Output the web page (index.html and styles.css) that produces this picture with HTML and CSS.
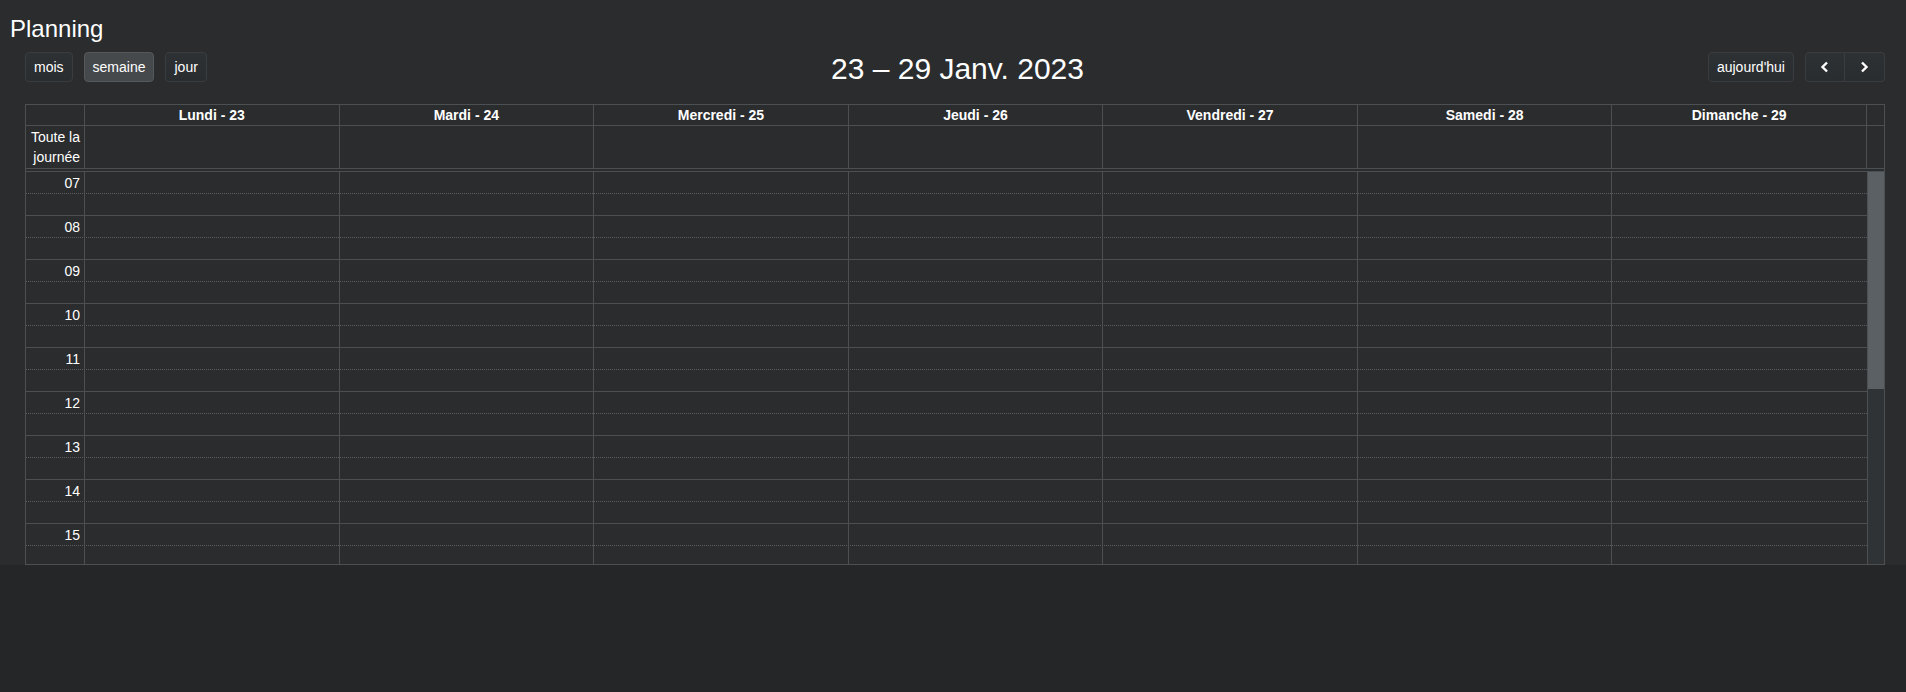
FILE: index.html
```html
<!DOCTYPE html>
<html lang="fr">
<head>
<meta charset="utf-8">
<title>Planning</title>
<link rel="stylesheet" href="styles.css">
</head>
<body>
<div class="page">
  <h1 class="page-title">Planning</h1>
  <div class="calendar">
    <div class="toolbar">
      <div class="tb-left">
        <button class="btn">mois</button>
        <button class="btn active">semaine</button>
        <button class="btn">jour</button>
      </div>
      <h2 class="tb-title">23 – 29 Janv. 2023</h2>
      <div class="tb-right">
        <button class="btn">aujourd'hui</button>
        <div class="btn-group">
          <button class="btn icon-btn" aria-label="précédent"><svg width="10" height="12" viewBox="0 0 10 12"><polyline points="7,1.5 2.5,6 7,10.5" fill="none" stroke="#fff" stroke-width="2.4" stroke-linejoin="miter"/></svg></button>
          <button class="btn icon-btn" aria-label="suivant"><svg width="10" height="12" viewBox="0 0 10 12"><polyline points="3,1.5 7.5,6 3,10.5" fill="none" stroke="#fff" stroke-width="2.4" stroke-linejoin="miter"/></svg></button>
        </div>
      </div>
    </div>

    <div class="grid">
      <div class="row head-row">
        <div class="cell axis"></div>
        <div class="cell day-head">Lundi - 23</div>
        <div class="cell day-head">Mardi - 24</div>
        <div class="cell day-head">Mercredi - 25</div>
        <div class="cell day-head">Jeudi - 26</div>
        <div class="cell day-head">Vendredi - 27</div>
        <div class="cell day-head">Samedi - 28</div>
        <div class="cell day-head">Dimanche - 29</div>
        <div class="cell gutter"></div>
      </div>
      <div class="row allday-row">
        <div class="cell axis allday-label">Toute la<br>journée</div>
        <div class="cell"></div><div class="cell"></div><div class="cell"></div><div class="cell"></div>
        <div class="cell"></div><div class="cell"></div><div class="cell"></div>
        <div class="cell gutter"></div>
      </div>
      <div class="divider"></div>
      <div class="body">
        <div class="slots" id="slots"></div>
        <div class="scrollbar"><div class="thumb"></div></div>
      </div>
    </div>
  </div>
</div>
<script src="app.js"></script>
</body>
</html>
```

FILE: app.js
```js
(function () {
  var slots = document.getElementById('slots');
  var html = '';
  for (var h = 7; h <= 15; h++) {
    var label = (h < 10 ? '0' : '') + h;
    for (var half = 0; half < 2; half++) {
      html += '<div class="row slot ' + (half === 0 ? 'minor' : 'major') + '">';
      html += '<div class="cell axis time">' + (half === 0 ? label : '') + '</div>';
      for (var d = 0; d < 7; d++) {
        html += '<div class="cell' + (d === 6 ? ' last' : '') + '"></div>';
      }
      html += '</div>';
    }
  }
  slots.innerHTML = html;
})();
```

FILE: styles.css
```css
* { box-sizing: border-box; }

html, body {
  margin: 0;
  padding: 0;
  background: #252628;
  color: #fff;
  font-family: "Liberation Sans", Arial, sans-serif;
  font-size: 14px;
}

.page {
  height: 565px;
  background: #2a2c2e;
  padding: 15px 21px 0 10px;
}

.page-title {
  margin: 0;
  font-size: 24px;
  font-weight: normal;
  line-height: 28px;
  color: #fff;
}

.calendar {
  margin: 9px 0 0 15px;
}

.toolbar {
  display: flex;
  justify-content: space-between;
  align-items: flex-start;
  height: 34px;
  margin-bottom: 18px;
}

.tb-left, .tb-right {
  display: flex;
  gap: 11px;
  width: 300px;
}

.tb-right { justify-content: flex-end; }

.tb-title {
  margin: 0;
  padding-left: 5px;
  font-size: 30px;
  font-weight: normal;
  line-height: 34px;
  color: #fff;
}

.btn {
  height: 30px;
  padding: 0 8px;
  font-family: "Liberation Sans", Arial, sans-serif;
  font-size: 14px;
  color: #fff;
  background: linear-gradient(#2e3134, #2a2d30);
  border: 1px solid #3a3d40;
  border-radius: 4px;
  cursor: pointer;
}

.btn.active {
  background: #45494c;
  border-color: #55595c;
}

.btn-group { display: flex; }

.icon-btn {
  width: 40px;
  display: flex;
  align-items: center;
  justify-content: center;
  padding: 0;
}

.btn-group .icon-btn:first-child {
  border-top-right-radius: 0;
  border-bottom-right-radius: 0;
}

.btn-group .icon-btn:last-child {
  border-left: none;
  border-top-left-radius: 0;
  border-bottom-left-radius: 0;
}

/* Grid */
.grid {
  border: 1px solid #4c5053;
}

.row {
  display: grid;
  grid-template-columns: 59px repeat(7, 1fr) 17px;
}

.cell {
  border-right: 1px solid #4c5053;
}

.cell.gutter { border-right: none; }

.head-row {
  height: 21px;
  border-bottom: 1px solid #4c5053;
}

.day-head {
  font-weight: bold;
  text-align: center;
  line-height: 20px;
}

.allday-row {
  height: 43px;
  border-bottom: 1px solid #4c5053;
}

.allday-label {
  text-align: right;
  line-height: 20px;
  padding: 1px 4px 0 0;
}

.divider {
  height: 3px;
  border-bottom: 1px solid #4c5053;
}

.body {
  display: flex;
  height: 392px;
  overflow: hidden;
}

.slots {
  flex: 1;
}

.slots .row {
  grid-template-columns: 59px repeat(7, 1fr);
  height: 22px;
}

.slot.minor { border-bottom: 1px dotted #5a5e62; }
.slot.major { border-bottom: 1px solid #4c5053; }

.cell.last { border-right: none; }

.time {
  text-align: right;
  line-height: 21px;
  padding: 1px 4px 0 0;
}

.scrollbar {
  width: 17px;
  background: #2f3335;
  border-left: 1px solid #4c5053;
}

.thumb {
  height: 217px;
  background: #5b6064;
}
```
